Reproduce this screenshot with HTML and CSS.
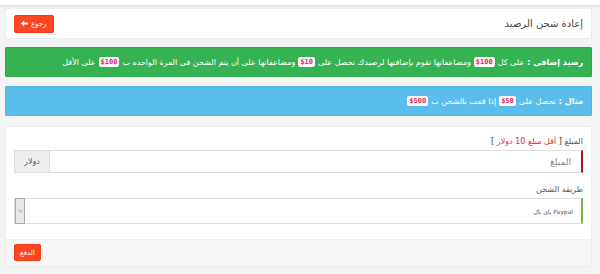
FILE: index.html
```html
<!DOCTYPE html>
<html lang="ar" dir="rtl">
<head>
    <meta charset="UTF-8">
    <meta name="viewport" content="width=device-width, initial-scale=1.0">
    <title>إعادة شحن الرصيد</title>
    <link rel="stylesheet" href="styles.css">
</head>
<body>
    <div class="topbar"></div>

    <div class="page">
        <div class="card page-head">
            <h3 class="page-title">إعادة شحن الرصيد</h3>
            <a href="#" class="btn btn-red">
                رجوع
                <svg class="arrow" viewBox="0 0 10 10" width="7" height="7">
                    <path d="M0 5 L4.5 0.8 L4.5 3.4 L10 3.4 L10 6.6 L4.5 6.6 L4.5 9.2 Z" fill="#fff"/>
                </svg>
            </a>
        </div>

        <div class="alert alert-green">
            <b>رصيد إضافي :</b> على كل <code>$100</code> ومضاعفاتها تقوم بإضافتها لرصيدك تحصل على <code>$10</code> ومضاعفاتها على أن يتم الشحن فى المرة الواحده ب <code>$100</code> على الأقل
        </div>

        <div class="alert alert-blue">
            <b>مثال :</b> تحصل على <code>$50</code> إذا قمت بالشحن ب <code>$500</code>
        </div>

        <form class="card form-card">
            <div class="card-body">
                <label class="field-label">المبلغ <span class="hint">[ <span class="hint-red">أقل مبلغ 10 دولار</span> ]</span></label>
                <div class="input-group">
                    <input type="text" class="amount" placeholder="المبلغ">
                    <span class="addon">دولار</span>
                </div>

                <label class="field-label">طريقة الشحن</label>
                <div class="select-box">
                    <select class="method">
                        <option>Paypal باي بال</option>
                    </select>
                    <span class="select-arrow">
                        <svg viewBox="0 0 6 4" width="5" height="4"><path d="M0.5 0.8 L3 3.2 L5.5 0.8" fill="none" stroke="#777" stroke-width="0.9"/></svg>
                    </span>
                </div>
            </div>
            <div class="card-footer">
                <button type="button" class="btn btn-red">الدفع</button>
            </div>
        </form>
    </div>
</body>
</html>
```

FILE: styles.css
```css
body {
    font-family: "DejaVu Sans", "Noto Sans", sans-serif;
    background-color: #f4f4f4;
    color: #333;
    margin: 0;
    padding: 0;
}

.topbar {
    height: 5px;
    background-color: #fff;
    box-shadow: 0 1px 3px rgba(0, 0, 0, 0.12);
}

.page {
    padding: 3px 8px 0 5px;
}

.card {
    background-color: #fff;
    border: 1px solid #ececec;
    border-radius: 2px;
}

.page-head {
    display: flex;
    align-items: center;
    justify-content: space-between;
    height: 29px;
    padding: 0 8px;
    margin-bottom: 8px;
}

.page-title {
    margin: 0;
    font-size: 10px;
    font-weight: normal;
    color: #444;
}

.btn {
    display: inline-flex;
    align-items: center;
    gap: 3px;
    background-color: #fc4521;
    color: #fff;
    border: 1px solid #f53b16;
    border-radius: 2px;
    font-family: inherit;
    font-size: 7px;
    text-decoration: none;
    cursor: pointer;
}

.page-head .btn {
    height: 16px;
    padding: 0 6px;
}

.alert {
    padding: 0 8px;
    height: 28px;
    display: flex;
    align-items: center;
    color: #fff;
    font-size: 8px;
    border-radius: 1px;
    white-space: nowrap;
}

.alert b {
    margin-left: 3px;
}

.alert-green {
    background-color: #35b251;
    border: 1px solid #2fa84a;
    margin-bottom: 9px;
}

.alert-blue {
    background-color: #5bbdec;
    border: 1px solid #54b5e3;
    margin-bottom: 10px;
}

code {
    font-family: "DejaVu Sans Mono", monospace;
    font-size: 7px;
    font-weight: bold;
    color: #d8345f;
    background-color: #fbf5f7;
    border-radius: 2px;
    padding: 1px 2px;
    margin: 0 3px;
    direction: ltr;
}

.form-card {
    margin: 0;
}

.card-body {
    padding: 10px 8px 15px;
}

.field-label {
    display: block;
    font-size: 8px;
    color: #555;
    margin-bottom: 4px;
}

.hint {
    color: #333;
}

.hint-red {
    color: #e12b2b;
}

.input-group {
    display: flex;
    height: 23px;
    margin-bottom: 12px;
}

.amount {
    flex: 1;
    border: 1px solid #ddd;
    border-right: 2px solid #a9141a;
    padding: 0 10px;
    font-family: inherit;
    font-size: 9px;
    outline: none;
    min-width: 0;
}

.amount::placeholder {
    color: #888;
}

.addon {
    width: 34px;
    display: flex;
    align-items: center;
    justify-content: center;
    background-color: #eee;
    border: 1px solid #ddd;
    border-right: none;
    font-size: 8px;
    color: #555;
}

.select-box {
    display: flex;
    height: 24px;
    border: 1px solid #ddd;
    border-right: 2px solid #7cb342;
}

.method {
    flex: 1;
    appearance: none;
    -webkit-appearance: none;
    border: none;
    background: #fff;
    font-family: inherit;
    font-size: 6px;
    color: #555;
    padding: 0 8px;
    outline: none;
}

.select-arrow {
    width: 8px;
    display: flex;
    align-items: center;
    justify-content: center;
    background-color: #e9e9e9;
    border: 1px solid #aaa;
    margin: -1px -1px -1px 0;
}

.card-footer {
    display: flex;
    justify-content: flex-end;
    background-color: #f7f7f7;
    border-top: 1px solid #eee;
    padding: 4px 8px 5px;
}

.card-footer .btn {
    height: 17px;
    padding: 0 5px;
}
```
